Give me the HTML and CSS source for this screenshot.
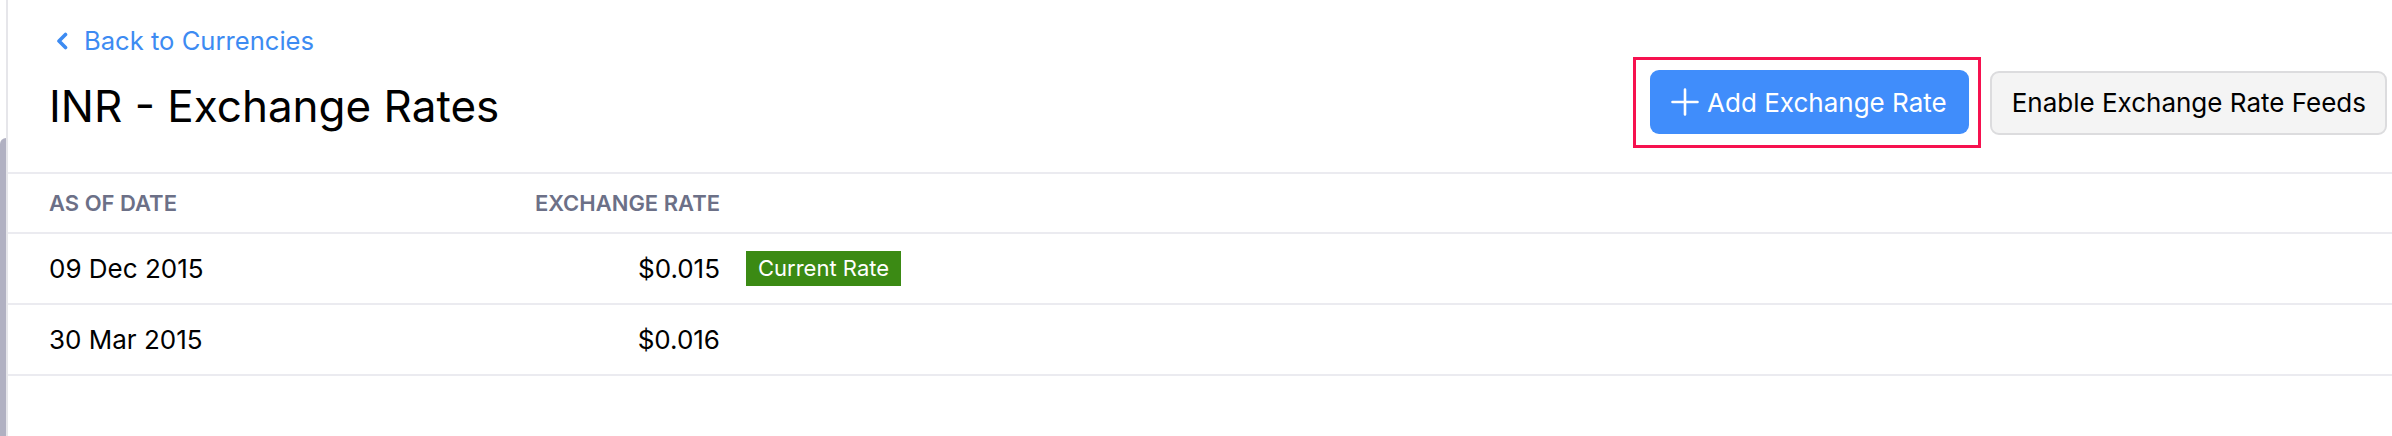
FILE: index.html
```html
<!DOCTYPE html>
<html lang="en">
<head>
<meta charset="utf-8">
<title>INR - Exchange Rates</title>
<link rel="stylesheet" href="styles.css">
</head>
<body>
<div class="app">
  <div class="gutter"><div class="thumb"></div></div>
  <main class="page">
    <header class="page-head">
      <div class="titles">
        <a class="back" href="#">
          <svg class="chev" width="12" height="18" viewBox="0 0 12 18" aria-hidden="true"><polyline points="9.5,2.5 3,9 9.5,15.5" fill="none" stroke="currentColor" stroke-width="3.6" stroke-linecap="round" stroke-linejoin="round"/></svg>
          <span>Back to Currencies</span>
        </a>
        <h1 class="title">INR - Exchange Rates</h1>
      </div>
      <div class="actions">
        <div class="highlight">
          <button class="btn btn-primary" type="button">
            <svg class="plus" width="28" height="28" viewBox="0 0 28 28" aria-hidden="true"><path d="M14 1.5V26.5M1.5 14H26.5" fill="none" stroke="currentColor" stroke-width="2.6" stroke-linecap="round"/></svg>
            <span>Add Exchange Rate</span>
          </button>
        </div>
        <button class="btn btn-secondary" type="button">Enable Exchange Rate Feeds</button>
      </div>
    </header>
    <div class="rates">
      <div class="row row-head">
        <div class="c-date">AS OF DATE</div>
        <div class="c-rate">EXCHANGE RATE</div>
        <div class="c-tag"></div>
      </div>
      <div class="row">
        <div class="c-date">09 Dec 2015</div>
        <div class="c-rate">$0.015</div>
        <div class="c-tag"><span class="badge">Current Rate</span></div>
      </div>
      <div class="row">
        <div class="c-date">30 Mar 2015</div>
        <div class="c-rate">$0.016</div>
        <div class="c-tag"></div>
      </div>
    </div>
  </main>
</div>
</body>
</html>
```

FILE: styles.css
```css
* { box-sizing: border-box; }
html, body { margin: 0; padding: 0; background: #fff; }
body {
  font-family: Inter, "Noto Sans", "Liberation Sans", sans-serif;
  color: #111;
  width: 2392px;
  height: 436px;
  overflow: hidden;
}
.app {
  display: flex;
  height: 436px;
}
.gutter {
  width: 6px;
  flex: none;
  display: flex;
  flex-direction: column;
  padding-top: 138px;
}
.thumb {
  flex: 1;
  background: #b1b1c2;
  border-top-left-radius: 6px;
}
.page {
  flex: 1;
  border-left: 2px solid #e6e6ea;
}
.page-head {
  display: flex;
  justify-content: space-between;
  align-items: flex-start;
  padding: 26px 5px 0 41px;
  height: 174px;
  border-bottom: 2px solid #ebebf0;
}
.titles {
  display: flex;
  flex-direction: column;
  align-items: flex-start;
}
.back {
  display: flex;
  align-items: center;
  color: #3d8bf2;
  text-decoration: none;
  font-size: 25.6px;
  line-height: 30px;
  height: 30px;
}
.chev {
  margin-left: 7px;
  margin-right: 16px;
  display: block;
}
.title {
  margin: 24px 0 0;
  font-size: 44px;
  line-height: 52px;
  font-weight: 400;
  color: #000;
}
.actions {
  display: flex;
  align-items: center;
  gap: 9px;
  margin-top: 31px;
}
.highlight {
  border: 3px solid #f6114f;
  padding: 10px 9px 11px 14px;
}
.btn {
  font-family: inherit;
  height: 64px;
  border-radius: 9px;
  font-size: 26px;
  display: flex;
  align-items: center;
  cursor: pointer;
}
.btn-primary {
  background: #408dfb;
  color: #fff;
  border: 0;
  padding: 0 22px 0 21px;
  gap: 8px;
}
.plus { display: block; }
.btn-secondary {
  background: #f4f4f4;
  color: #000;
  border: 2px solid #dcdcde;
  padding: 0 19px 0 20px;
}
.rates {
  display: flex;
  flex-direction: column;
}
.row {
  display: grid;
  grid-template-columns: 354px 291px auto;
  column-gap: 26px;
  align-items: center;
  padding-left: 41px;
  height: 71px;
  border-bottom: 2px solid #ebebf0;
  font-size: 26px;
  color: #000;
}
.row.row-head {
  height: 60px;
  font-size: 22px;
  font-weight: 600;
  color: #6c7087;
}
.c-rate { text-align: right; }
.badge {
  display: inline-block;
  background: #3b8a14;
  color: #fff;
  font-size: 22px;
  line-height: 35px;
  padding: 0 12px;
}
```
